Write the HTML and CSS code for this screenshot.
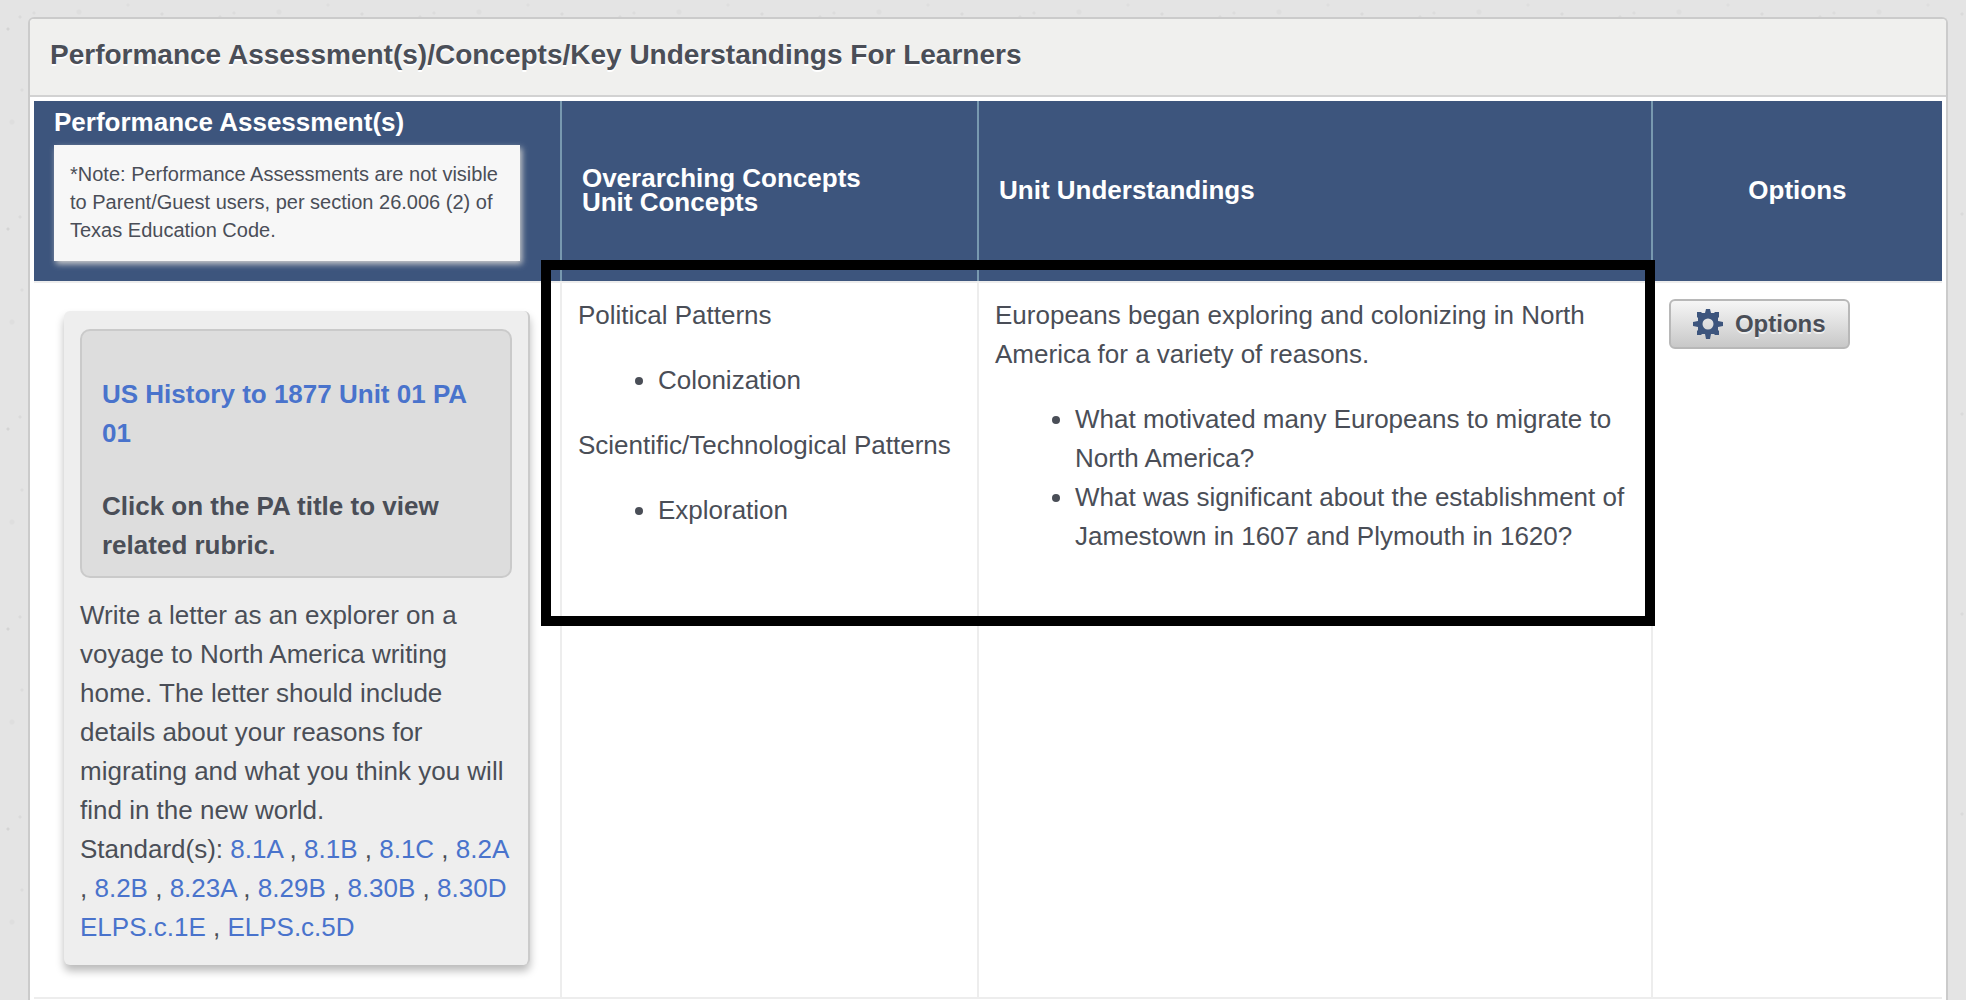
FILE: index.html
```html
<!DOCTYPE html>
<html lang="en">
<head>
<meta charset="utf-8">
<meta name="viewport" content="width=device-width, initial-scale=1">
<title>Performance Assessment(s)/Concepts/Key Understandings For Learners</title>
<link rel="stylesheet" href="styles.css">
</head>
<body>
<main class="panel">
  <h1 class="panel-title">Performance Assessment(s)/Concepts/Key Understandings For Learners</h1>
  <div class="panel-body">
    <table class="units">
      <colgroup>
        <col class="col-assessment">
        <col class="col-concepts">
        <col class="col-understandings">
        <col class="col-options">
      </colgroup>
      <thead>
        <tr>
          <th scope="col">Performance Assessment(s)
            <p class="note">*Note: Performance Assessments are not visible to Parent/Guest users, per section 26.006 (2) of Texas Education Code.</p>
          </th>
          <th scope="col">Overarching Concepts<br>Unit Concepts</th>
          <th scope="col">Unit Understandings</th>
          <th scope="col" class="center">Options</th>
        </tr>
      </thead>
      <tbody>
        <tr>
          <td class="assessment-cell">
            <article class="card">
              <div class="card-title">
                <p><a href="#rubric">US History to 1877 Unit 01 PA 01</a></p>
                <p>Click on the PA title to view related rubric.</p>
              </div>
              <p>Write a letter as an explorer on a voyage to North America writing home. The letter should include details about your reasons for migrating and what you think you will find in the new world.</p>
              <p>Standard(s): <a href="#s">8.1A</a> , <a href="#s">8.1B</a> , <a href="#s">8.1C</a> , <a href="#s">8.2A</a> , <a href="#s">8.2B</a> , <a href="#s">8.23A</a> , <a href="#s">8.29B</a> , <a href="#s">8.30B</a> , <a href="#s">8.30D</a><br><a href="#s">ELPS.c.1E</a> , <a href="#s">ELPS.c.5D</a></p>
            </article>
          </td>
          <td>
            <p>Political Patterns</p>
            <ul><li>Colonization</li></ul>
            <p>Scientific/Technological Patterns</p>
            <ul><li>Exploration</li></ul>
          </td>
          <td>
            <p>Europeans began exploring and colonizing in North America for a variety of reasons.</p>
            <ul>
              <li>What motivated many Europeans to migrate to North America?</li>
              <li>What was significant about the establishment of Jamestown in 1607 and Plymouth in 1620?</li>
            </ul>
          </td>
          <td class="options-cell">
            <button type="button" class="options-button">
              <svg class="gear" viewBox="0 0 30 30" aria-hidden="true">
                <path fill-rule="evenodd" d="M13 0h4l1 4h3l1-1h4v5l-1 1v3l5 1v4l-5 1v3l1 1v4h-4l-1-1h-3l-1 5h-4l-1-5H9l-1 1H4v-4l1-1v-3l-5-1v-4l5-1V9L4 8V3h4l1 1h3zM15 9.500a5.500 5.500 0 1 0 0 11a5.500 5.500 0 1 0 0-11z"/>
              </svg>
              Options
            </button>
          </td>
        </tr>
      </tbody>
    </table>
    <div class="highlight"></div>
  </div>
</main>
</body>
</html>
```
FILE: styles.css
```css
* { box-sizing: border-box; }

body {
  display: flex;
  flex-direction: column;
  min-height: 100vh;
  margin: 0;
  padding: 17px 18px 0 28px;
  background-color: #e4e4e4;
  background-image:
    radial-gradient(circle at 8px 29px, #d4d4d4 1px, transparent 2px),
    radial-gradient(circle at 20px 17px, #dadada 1px, transparent 2px),
    radial-gradient(circle at 34px 13px, #dcdcdc 1px, transparent 2px),
    radial-gradient(circle at 79px 12px, #dedede 2px, transparent 3px),
    radial-gradient(circle at 128px 5px, #dedede 1px, transparent 2px),
    radial-gradient(circle at 162px 14px, #dadada 1px, transparent 2px),
    radial-gradient(circle at 12px 122px, #dedede 2px, transparent 3px),
    radial-gradient(circle at 22px 90px, #dcdcdc 1px, transparent 2px);
  background-size: 200px 200px;
  color: #4a4e57;
  font: 26px/39px "Liberation Sans", Arial, Helvetica, sans-serif;
}

p, ul { margin: 0; }

a { color: #4973cc; text-decoration: none; }

.panel {
  flex: 1;
  border: 2px solid #cbcbcb;
  border-bottom: 0;
  border-radius: 6px 6px 0 0;
  background: #fff;
}

.panel-title {
  margin: 0;
  padding: 16px 20px 20px;
  border-bottom: 2px solid #d2d2d2;
  border-radius: 4px 4px 0 0;
  background: #f0f0ee;
  font-size: 28px;
  line-height: 40px;
  text-shadow: 0 2px 0 #fff;
}

.panel-body {
  position: relative;
  margin: 4px 4px 0;
}

.units {
  width: 100%;
  table-layout: fixed;
  border-collapse: separate;
  border-spacing: 0;
}

.col-assessment { width: 27.67%; }
.col-concepts { width: 21.86%; }
.col-understandings { width: 35.32%; }

th {
  padding: 9px 40px 20px 20px;
  border-right: 2px solid #7899b0;
  background: #3d557d;
  color: #fff;
  line-height: 24px;
  text-align: left;
}

th:not(:first-child) { padding: 9px 20px 11px; }

th:last-child { border-right: 0; }

th.center { text-align: center; }

.note {
  margin-top: 11px;
  padding: 15px 16px 17px;
  background: #f7f7f7;
  box-shadow: 2px 3px 6px #ccc;
  color: #4a4e57;
  font-size: 20px;
  font-weight: normal;
  line-height: 28px;
}

td {
  padding: 13px 16px;
  border: solid #ededed;
  border-width: 2px 2px 2px 0;
  vertical-align: top;
}

td:last-child { border-right: 0; }

td ul {
  margin: 26px 0;
  padding-left: 80px;
}

.assessment-cell { padding: 28px 30px 32px; }

.card {
  padding: 18px 16px;
  border-right: 2px solid #cbcbcb;
  border-radius: 6px;
  background: #eee;
  box-shadow: 0 6px 8px #bbb;
}

.card-title {
  margin-bottom: 18px;
  padding: 44px 20px 11px;
  border: 2px solid #cacaca;
  border-radius: 10px;
  background: #ddd;
  font-weight: bold;
}

.card-title p + p { margin-top: 34px; }

.options-cell { padding-top: 16px; }

.options-button {
  display: flex;
  align-items: center;
  gap: 12px;
  height: 50px;
  padding: 0 22px;
  border: 2px solid #b8b8b8;
  border-radius: 6px;
  background: linear-gradient(#f6f6f6, #c8c8c8);
  color: #4a4e57;
  font: bold 24px/40px "Liberation Sans", Arial, Helvetica, sans-serif;
  text-shadow: 0 2px 0 #eee;
}

.gear {
  width: 30px;
  height: 30px;
  fill: #3d557d;
}

/* frame that spans the concepts and understandings columns */
.highlight {
  position: absolute;
  top: 159px;
  right: 15.04%;
  left: 26.57%;
  height: 366px;
  border: 10px solid #000;
  pointer-events: none;
}
```
